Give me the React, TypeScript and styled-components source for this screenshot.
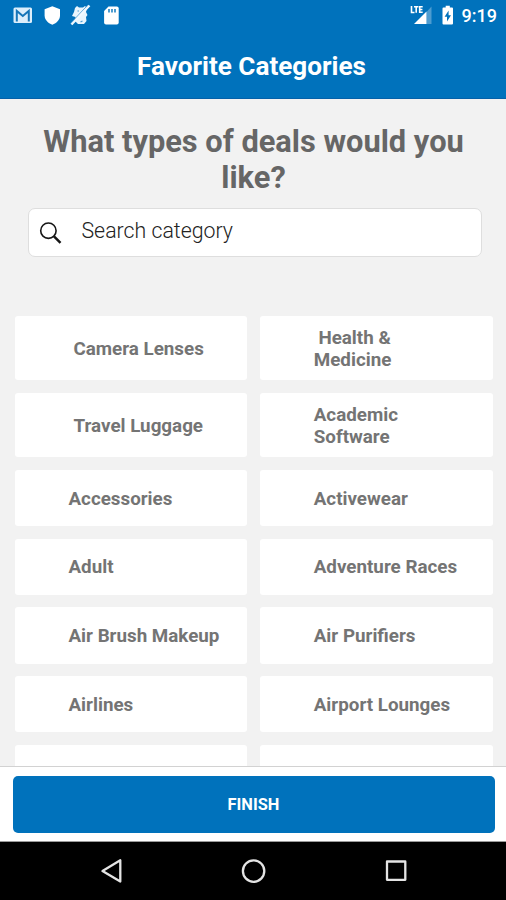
import React from 'react';
import styled, { createGlobalStyle } from 'styled-components';

const GlobalStyle = createGlobalStyle`
  * { box-sizing: border-box; }
  body { margin: 0; background: #f2f2f2; font-family: Roboto, "Liberation Sans", sans-serif; }
`;

const Screen = styled.div`
  display: flex;
  flex-direction: column;
  width: 506px;
  height: 900px;
  overflow: hidden;
  background: #f2f2f2;
`;

const TopBar = styled.header`
  flex: none;
  height: 99px;
  background: #0072bc;
  border-bottom: 1px solid #0561a9;
  color: #fff;
`;

const StatusBar = styled.div`
  display: flex;
  justify-content: space-between;
  height: 32px;
  padding: 0 9px 0 13px;
`;

const StatusGroup = styled.div`
  display: flex;
  align-items: center;
  svg { display: block; }
`;

const Clock = styled.span`
  margin-left: 9px;
  font-size: 18px;
  line-height: 32px;
  font-weight: 500;
`;

const ScreenTitle = styled.h1`
  margin: 0;
  font-size: 26.1px;
  line-height: 30px;
  padding: 19px 3px 0 0;
  font-weight: 700;
  text-align: center;
`;

const Content = styled.main`
  flex: 1;
  min-height: 0;
  overflow: hidden;
  padding: 25px 13.5px 0 14.5px;
`;

const Question = styled.h2`
  margin: 0;
  color: #666;
  font-size: 30.8px;
  line-height: 36px;
  font-weight: 700;
  text-align: center;
`;

const SearchBox = styled.label`
  display: flex;
  align-items: center;
  height: 49px;
  margin: 12px 10.5px 0 13px;
  padding-left: 10px;
  background: #fff;
  border: 1px solid #dedede;
  border-radius: 7px;
  svg { flex: none; display: block; }
`;

const SearchInput = styled.input`
  flex: 1;
  min-width: 0;
  margin: 0 0 4px 19px;
  padding: 0;
  border: 0;
  outline: 0;
  background: transparent;
  font: 300 21.3px/28px Roboto, "Liberation Sans", sans-serif;
  &::placeholder { color: #222; opacity: 1; }
`;

const CategoryGrid = styled.div`
  display: grid;
  grid-template-columns: repeat(2, minmax(0, 1fr));
  gap: 12.5px;
  margin-top: 59px;
`;

const CategoryCard = styled.button<{ $tall?: boolean; $inset?: boolean }>`
  display: flex;
  align-items: center;
  height: ${p => (p.$tall ? 64.4 : 56.3)}px;
  padding: 1.5px 0 0 ${p => (p.$inset ? 59 : 54)}px;
  border: 0;
  border-radius: 3px;
  background: #fff;
  color: #747474;
  font: 700 18.8px/22px Roboto, "Liberation Sans", sans-serif;
  text-align: left;
  white-space: pre;
`;

const Footer = styled.footer`
  flex: none;
  height: 76px;
  padding: 9px 11.5px 0 12.5px;
  background: #fff;
  border-top: 1px solid #d2d2d2;
  border-bottom: 1px solid #9b9b9b;
`;

const FinishButton = styled.button`
  display: block;
  width: 100%;
  height: 56.5px;
  padding: 2px 0 0;
  border: 0;
  border-radius: 5px;
  background: #0072bc;
  color: #fff;
  font: 700 16.4px/20px Roboto, "Liberation Sans", sans-serif;
`;

const NavBar = styled.nav`
  flex: none;
  display: flex;
  height: 58px;
  background: #000;
  svg { display: block; }
`;

const categories: { name: string; tall?: boolean; inset?: boolean }[] = [
  { name: 'Camera Lenses', tall: true, inset: true },
  { name: ' Health &\nMedicine', tall: true },
  { name: 'Travel Luggage', tall: true, inset: true },
  { name: 'Academic\nSoftware', tall: true },
  { name: 'Accessories' },
  { name: 'Activewear' },
  { name: 'Adult' },
  { name: 'Adventure Races' },
  { name: 'Air Brush Makeup' },
  { name: 'Air Purifiers' },
  { name: 'Airlines' },
  { name: 'Airport Lounges' },
  { name: '' },
  { name: '' },
];

const NotificationIcons = () => (
  <svg width="110" height="32" viewBox="0 0 110 32">
    <rect x="0.5" y="7.500" width="18.500" height="15.500" rx="1.500" fill="#dceefb" />
    <path d="M3.800 21.500V11l6 5 6-5v10.500" fill="none" stroke="#1675b8" strokeWidth="2" />
    <path d="M39.300 6.300L47 9.200v6c0 4.500-3.300 7.800-7.700 9.600-4.400-1.800-7.700-5.100-7.700-9.600v-6z" fill="#fff" />
    <path d="M62 8l2-2 2 1.500h4L72 6l2 2-1 4 1.500 3-1.500 2 .5 4-2.500 3h-6l-3-3 .5-4-3.500-1 2-4z" fill="#e9f5fd" />
    <path d="M57.500 23.500L75 5" stroke="#4396ce" strokeWidth="1" />
    <path d="M58.500 24.500L76.500 5.500" stroke="#f2f9ff" strokeWidth="2.200" />
    <path d="M64.500 11h1.500M67.500 22l2-1" stroke="#4d9cd1" strokeWidth="1.200" />
    <path d="M95.500 6.500h8.300q1.900 0 1.900 1.900v14.200q0 1.900-1.900 1.900H93q-1.900 0-1.900-1.900V11z" fill="#fff" />
    <path d="M96 9v3.500M99 9v3.500M102 9v3.500" stroke="#0072bc" strokeWidth="1.400" />
  </svg>
);

const NetworkIcons = () => (
  <svg width="46" height="32" viewBox="0 0 46 32">
    <path d="M24.500 6.500V24h-5V12z" fill="#fff" fillOpacity=".3" />
    <path d="M19.500 11.500V24H7z" fill="#fff" />
    <path d="M4.500 6v6.500h3M7 6.700h4.400M9.200 6.700v6M15.700 6.700h-3v5.600h3M12.700 9.500h2.700" fill="none" stroke="#fff" strokeWidth="1.600" />
    <path d="M36.500 7.500h2.200V5.800h4.100v1.700h2.200q1 0 1 1v15q0 1-1 1h-8.500q-1 0-1-1v-15q0-1 1-1z" fill="#fff" />
    <path d="M41.600 10.500l-4 6.300h2.400v4.700l4-6.300h-2.400z" fill="#0072bc" />
  </svg>
);

const SearchIcon = () => (
  <svg width="24" height="24" viewBox="0 0 24 24" fill="none" stroke="#161616">
    <circle cx="9.400" cy="9.700" r="7.700" strokeWidth="1.600" />
    <path d="M15 15.300l6.500 6.500" strokeWidth="2.500" />
  </svg>
);

const NavIcons = () => (
  <svg width="506" height="58" viewBox="0 0 506 58" fill="none" stroke="#e4e4e4" strokeWidth="2.300" strokeLinejoin="round">
    <path d="M120.300 18.300v21.300L102.500 29z" />
    <circle cx="253.600" cy="29.100" r="10.700" />
    <rect x="387" y="19.500" width="18.300" height="18.300" />
  </svg>
);

export default function App() {
  return (
    <Screen>
      <GlobalStyle />
      <TopBar>
        <StatusBar>
          <StatusGroup><NotificationIcons /></StatusGroup>
          <StatusGroup><NetworkIcons /><Clock>9:19</Clock></StatusGroup>
        </StatusBar>
        <ScreenTitle>Favorite Categories</ScreenTitle>
      </TopBar>
      <Content>
        <Question>What types of deals would you<br />like?</Question>
        <SearchBox>
          <SearchIcon />
          <SearchInput placeholder="Search category" />
        </SearchBox>
        <CategoryGrid>
          {categories.map((c, i) => (
            <CategoryCard key={i} $tall={c.tall} $inset={c.inset}>{c.name}</CategoryCard>
          ))}
        </CategoryGrid>
      </Content>
      <Footer><FinishButton>FINISH</FinishButton></Footer>
      <NavBar><NavIcons /></NavBar>
    </Screen>
  );
}
